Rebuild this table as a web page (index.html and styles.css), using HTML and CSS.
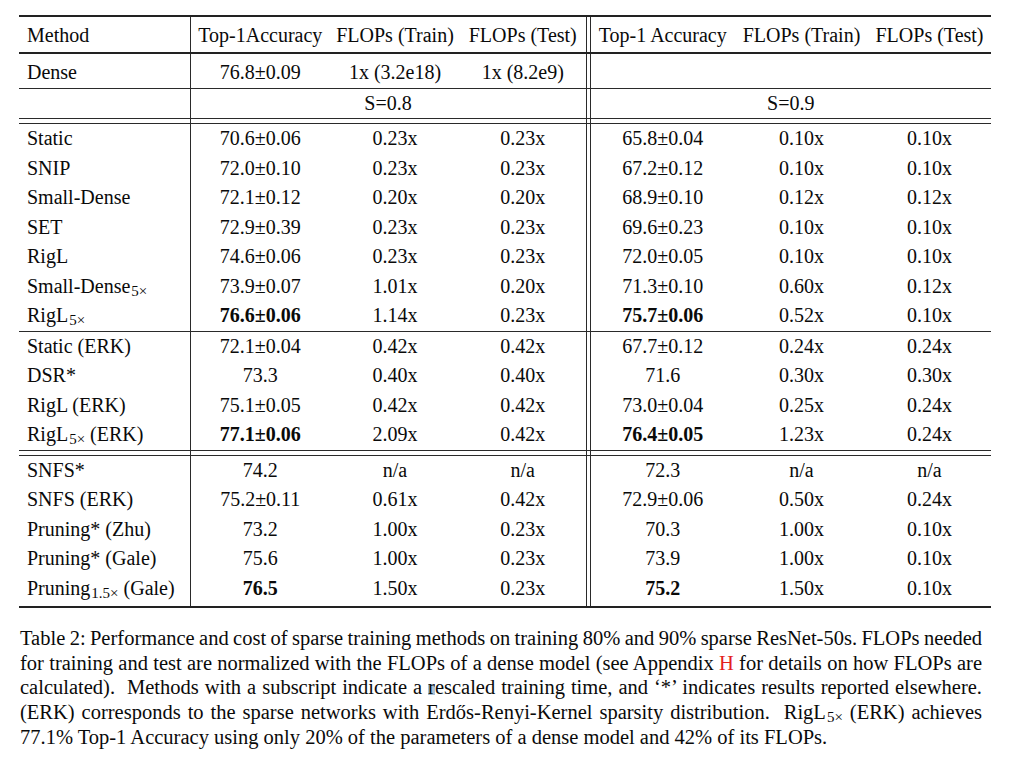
FILE: index.html
```html
<!DOCTYPE html>
<html>
<head>
<meta charset="utf-8">
<title>Table 2</title>
<link rel="stylesheet" href="styles.css">
</head>
<body>
<div class="page">
  <table class="results">
    <colgroup>
      <col class="c-method"><col class="c-acc1"><col class="c-tr1"><col class="c-te1"><col class="c-gap"><col class="c-acc2"><col class="c-tr2"><col class="c-te2">
    </colgroup>
    <thead>
      <tr class="head">
        <th class="l">Method</th><th>Top-1Accuracy</th><th>FLOPs (Train)</th><th>FLOPs (Test)</th><th></th><th>Top-1 Accuracy</th><th>FLOPs (Train)</th><th>FLOPs (Test)</th>
      </tr>
    </thead>
    <tbody>
      <tr class="dense">
        <td class="l">Dense</td><td>76.8±0.09</td><td>1x (3.2e18)</td><td>1x (8.2e9)</td><td></td><td></td><td></td><td></td>
      </tr>
      <tr class="sparsity">
        <td></td><td colspan="3">S=0.8</td><td></td><td colspan="3">S=0.9</td>
      </tr>
      <tr class="dbl"><td></td><td></td><td></td><td></td><td></td><td></td><td></td><td></td></tr>
      <tr><td class="l">Static</td><td>70.6±0.06</td><td>0.23x</td><td>0.23x</td><td></td><td>65.8±0.04</td><td>0.10x</td><td>0.10x</td></tr>
      <tr><td class="l">SNIP</td><td>72.0±0.10</td><td>0.23x</td><td>0.23x</td><td></td><td>67.2±0.12</td><td>0.10x</td><td>0.10x</td></tr>
      <tr><td class="l">Small-Dense</td><td>72.1±0.12</td><td>0.20x</td><td>0.20x</td><td></td><td>68.9±0.10</td><td>0.12x</td><td>0.12x</td></tr>
      <tr><td class="l">SET</td><td>72.9±0.39</td><td>0.23x</td><td>0.23x</td><td></td><td>69.6±0.23</td><td>0.10x</td><td>0.10x</td></tr>
      <tr><td class="l">RigL</td><td>74.6±0.06</td><td>0.23x</td><td>0.23x</td><td></td><td>72.0±0.05</td><td>0.10x</td><td>0.10x</td></tr>
      <tr><td class="l">Small-Dense<sub class="s">5×</sub></td><td>73.9±0.07</td><td>1.01x</td><td>0.20x</td><td></td><td>71.3±0.10</td><td>0.60x</td><td>0.12x</td></tr>
      <tr class="grp-end"><td class="l">RigL<sub class="s">5×</sub></td><td><b>76.6±0.06</b></td><td>1.14x</td><td>0.23x</td><td></td><td><b>75.7±0.06</b></td><td>0.52x</td><td>0.10x</td></tr>
      <tr><td class="l">Static (ERK)</td><td>72.1±0.04</td><td>0.42x</td><td>0.42x</td><td></td><td>67.7±0.12</td><td>0.24x</td><td>0.24x</td></tr>
      <tr><td class="l">DSR*</td><td>73.3</td><td>0.40x</td><td>0.40x</td><td></td><td>71.6</td><td>0.30x</td><td>0.30x</td></tr>
      <tr><td class="l">RigL (ERK)</td><td>75.1±0.05</td><td>0.42x</td><td>0.42x</td><td></td><td>73.0±0.04</td><td>0.25x</td><td>0.24x</td></tr>
      <tr class="grp-end"><td class="l">RigL<sub class="s">5×</sub> (ERK)</td><td><b>77.1±0.06</b></td><td>2.09x</td><td>0.42x</td><td></td><td><b>76.4±0.05</b></td><td>1.23x</td><td>0.24x</td></tr>
      <tr class="dbl"><td></td><td></td><td></td><td></td><td></td><td></td><td></td><td></td></tr>
      <tr><td class="l">SNFS*</td><td>74.2</td><td>n/a</td><td>n/a</td><td></td><td>72.3</td><td>n/a</td><td>n/a</td></tr>
      <tr><td class="l">SNFS (ERK)</td><td>75.2±0.11</td><td>0.61x</td><td>0.42x</td><td></td><td>72.9±0.06</td><td>0.50x</td><td>0.24x</td></tr>
      <tr><td class="l">Pruning* (Zhu)</td><td>73.2</td><td>1.00x</td><td>0.23x</td><td></td><td>70.3</td><td>1.00x</td><td>0.10x</td></tr>
      <tr><td class="l">Pruning* (Gale)</td><td>75.6</td><td>1.00x</td><td>0.23x</td><td></td><td>73.9</td><td>1.00x</td><td>0.10x</td></tr>
      <tr class="last"><td class="l">Pruning<sub class="s">1.5×</sub> (Gale)</td><td><b>76.5</b></td><td>1.50x</td><td>0.23x</td><td></td><td><b>75.2</b></td><td>1.50x</td><td>0.10x</td></tr>
    </tbody>
  </table>

  <p class="caption">
    <span class="cl">Table 2: Performance and cost of sparse training methods on training 80% and 90% sparse ResNet-50s. FLOPs needed</span>
    <span class="cl">for training and test are normalized with the FLOPs of a dense model (see Appendix <span class="ref">H</span> for details on how FLOPs are</span>
    <span class="cl">calculated). &nbsp;Methods with a subscript indicate a <span class="mark">r</span>escaled training time, and ‘*’ indicates results reported elsewhere.</span>
    <span class="cl">(ERK) corresponds to the sparse networks with Erdős-Renyi-Kernel sparsity distribution. &nbsp;RigL<sub class="s cs">5×</sub> (ERK) achieves</span>
    <span class="cl last-line">77.1% Top-1 Accuracy using only 20% of the parameters of a dense model and 42% of its FLOPs.</span>
  </p>
</div>
</body>
</html>
```

FILE: styles.css
```css
* {
  box-sizing: border-box;
}

html,
body {
  margin: 0;
  padding: 0;
  background: #ffffff;
}

body {
  font-family: "Liberation Serif", "Times New Roman", serif;
  color: #0a0a0a;
}

.page {
  padding: 15px 18px 0 19px;
}

/* ---------- table ---------- */
.results {
  border-collapse: collapse;
  table-layout: fixed;
  width: 972px;
  font-size: 20px;
}

.c-method { width: 171px; border-right: 1px solid #2a2a2a; }
.c-acc1   { width: 140px; }
.c-tr1    { width: 130px; }
.c-te1    { width: 126px; }
.c-gap    { width: 4px; border-left: 1px solid #2a2a2a; border-right: 1px solid #2a2a2a; }
.c-acc2   { width: 145px; }
.c-tr2    { width: 133px; }
.c-te2    { width: 123px; }

.results th,
.results td {
  padding: 0 3px;
  line-height: 29.5px;
  font-weight: normal;
  text-align: center;
  white-space: nowrap;
  vertical-align: top;
}

.results .l {
  text-align: left;
  padding-left: 8px;
}

.results b {
  font-weight: bold;
}

.head th {
  border-top: 2px solid #222222;
  border-bottom: 2px solid #222222;
  padding-top: 4px;
  padding-bottom: 1px;
}

.dense td {
  padding-top: 4px;
  padding-bottom: 1px;
  border-bottom: 1px solid #2a2a2a;
}

.sparsity td {
  line-height: 29px;
  border-bottom: 1px solid #2a2a2a;
}

.dbl td {
  height: 5px;
  line-height: 0;
  padding: 0;
  border-top: 1px solid #2a2a2a;
  border-bottom: 1px solid #2a2a2a;
}

.grp-end td {
  border-bottom: 1px solid #2a2a2a;
}

.last td {
  padding-bottom: 3px;
  border-bottom: 2px solid #222222;
}

.s {
  font-size: 15px;
  line-height: 0;
  vertical-align: -3px;
  margin-left: 1px;
}

/* ---------- caption ---------- */
.caption {
  width: 962px;
  margin: 18px 0 0 1px;
  font-size: 20.5px;
  line-height: 24.7px;
}

.cl {
  display: block;
  text-align: justify;
  text-align-last: justify;
  word-spacing: -3px;
}

.cl.last-line {
  text-align: left;
  text-align-last: left;
  word-spacing: 0;
}

.cs {
  font-size: 15px;
  vertical-align: -3px;
}

.ref {
  color: #e3211c;
}

.mark {
  background: linear-gradient(#a9c1d8, #a9c1d8) no-repeat 0 70% / 7px 11px;
}
```
